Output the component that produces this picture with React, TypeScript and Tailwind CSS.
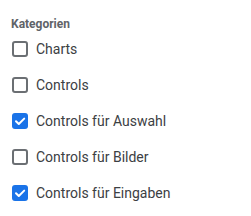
const items = [
  { label: "Charts", checked: false },
  { label: "Controls", checked: false },
  { label: "Controls für Auswahl", checked: true },
  { label: "Controls für Bilder", checked: false },
  { label: "Controls für Eingaben", checked: true },
];

function Box({ checked }: { checked: boolean }) {
  if (checked) {
    return (
      <span className="flex h-4 w-4 shrink-0 items-center justify-center rounded-[3px] bg-[#1a73e8]">
        <svg viewBox="0 0 16 16" className="h-4 w-4" fill="none">
          <path d="M4 8.2l2.8 2.8L12.2 5.6" stroke="white" strokeWidth="2" strokeLinecap="round" strokeLinejoin="round" />
        </svg>
      </span>
    );
  }
  return <span className="h-4 w-4 shrink-0 rounded-[3px] border-2 border-[#6b6f73] bg-white" />;
}

export default function App() {
  return (
    <div className="h-[216px] w-[251px] bg-white pl-[11px] pt-[18px] font-['Roboto',sans-serif]">
      <div className="text-[12px] font-bold leading-[13px] text-[#5f6368]">Kategorien</div>
      <ul>
        {items.map((it) => (
          <li key={it.label} className="flex h-9 items-center gap-2 pl-px">
            <Box checked={it.checked} />
            <span className="text-[14px] text-[#3c4043]">{it.label}</span>
          </li>
        ))}
      </ul>
    </div>
  );
}
